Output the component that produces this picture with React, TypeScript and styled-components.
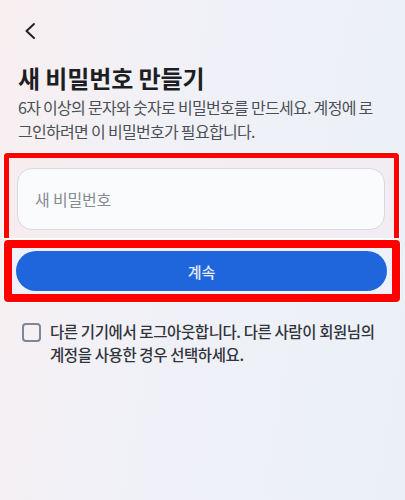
import styled, { createGlobalStyle } from "styled-components";
import { useState } from "react";

const GlobalStyle = createGlobalStyle`
  * { box-sizing: border-box; }
  body {
    margin: 0;
    font-family: "Noto Sans CJK KR", "Noto Sans", sans-serif;
  }
`;

const App = () => {
  const [password, setPassword] = useState("");
  const [logoutOthers, setLogoutOthers] = useState(false);

  return (
    <Page>
      <GlobalStyle />
      <BackButton aria-label="뒤로">
        <svg width="14" height="18" viewBox="0 0 14 18" fill="none">
          <path
            d="M11 2 L3.5 9 L11 16"
            stroke="#222"
            strokeWidth="2"
            strokeLinecap="round"
            strokeLinejoin="round"
          />
        </svg>
      </BackButton>

      <Title>새 비밀번호 만들기</Title>
      <Description>
        6자 이상의 문자와 숫자로 비밀번호를 만드세요. 계정에 로
        <br />
        그인하려면 이 비밀번호가 필요합니다.
      </Description>

      {/* highlighted input */}
      <InputFrame>
        <PasswordInput
          type="password"
          placeholder="새 비밀번호"
          value={password}
          onChange={(e) => setPassword(e.target.value)}
        />
      </InputFrame>

      {/* highlighted continue button */}
      <ButtonFrame>
        <ContinueButton>계속</ContinueButton>
      </ButtonFrame>

      <CheckRow>
        <CheckBox
          type="checkbox"
          checked={logoutOthers}
          onChange={() => setLogoutOthers((prev) => !prev)}
        />
        <CheckText>
          다른 기기에서 로그아웃합니다. 다른 사람이 회원님의
          <br />
          계정을 사용한 경우 선택하세요.
        </CheckText>
      </CheckRow>
    </Page>
  );
};

export default App;

// page
const Page = styled.div`
  width: 405px;
  min-height: 500px;
  display: flex;
  flex-direction: column;
  padding: 21px 0 0;
  background: linear-gradient(100deg, #f8eff0 0%, #f1f1f7 35%, #ebf0f8 100%);
`;

// back arrow
const BackButton = styled.button`
  width: 20px;
  height: 20px;
  margin-left: 20px;
  padding: 0;
  border: none;
  background: none;
  display: flex;
  align-items: center;
  justify-content: center;
  cursor: pointer;
`;

// heading
const Title = styled.h1`
  margin: 21px 0 0 18px;
  font-size: 24px;
  line-height: 32px;
  font-weight: 700;
  color: #1c1e21;
  letter-spacing: -0.1px;
`;

const Description = styled.p`
  margin: 1px 0 0 18px;
  font-size: 16px;
  line-height: 24px;
  color: #4b4f56;
  letter-spacing: -0.7px;
`;

// red annotation frames
const InputFrame = styled.div`
  margin: 10px 6px 0 4px;
  padding: 10px 9px 8px 8px;
  border: 5px solid #ff0000;
  border-bottom: none;
  border-radius: 4px 4px 0 0;
  box-shadow: 0 0 0 1px #ffffff;
  background: rgba(248, 232, 234, 0.45);
`;

const ButtonFrame = styled.div`
  margin: 2px 5px 0 4px;
  padding: 3px 5px 3px 4px;
  border: 8px solid #ff0000;
  border-radius: 4px;
  box-shadow: 0 0 0 1px #ffffff;
  background: #eef1f9;
`;

// input
const PasswordInput = styled.input`
  display: block;
  width: 100%;
  height: 62px;
  padding: 0 17px;
  border: 1px solid #d6dae2;
  border-radius: 15px;
  background: #fafbfd;
  font-family: inherit;
  font-size: 16px;
  color: #1c1e21;
  outline: none;
  letter-spacing: -0.2px;
  &::placeholder {
    color: #858a93;
  }
`;

// continue button
const ContinueButton = styled.button`
  display: block;
  width: 100%;
  height: 40px;
  border: none;
  border-radius: 22px;
  background: #1f66dc;
  color: #e6edfb;
  font-family: inherit;
  font-size: 15px;
  font-weight: 500;
  cursor: pointer;
`;

// checkbox row
const CheckRow = styled.label`
  display: flex;
  align-items: flex-start;
  gap: 9px;
  margin: 18px 0 0 22px;
  cursor: pointer;
`;

const CheckBox = styled.input`
  appearance: none;
  flex: none;
  width: 19px;
  height: 19px;
  margin: 3px 0 0;
  border: 2px solid #7d8797;
  border-radius: 4px;
  background: transparent;
  cursor: pointer;
  &:checked {
    background: #1f66dc;
    border-color: #1f66dc;
  }
`;

const CheckText = styled.span`
  font-size: 15.5px;
  line-height: 23px;
  font-weight: 500;
  color: #30343b;
  letter-spacing: -0.4px;
`;
